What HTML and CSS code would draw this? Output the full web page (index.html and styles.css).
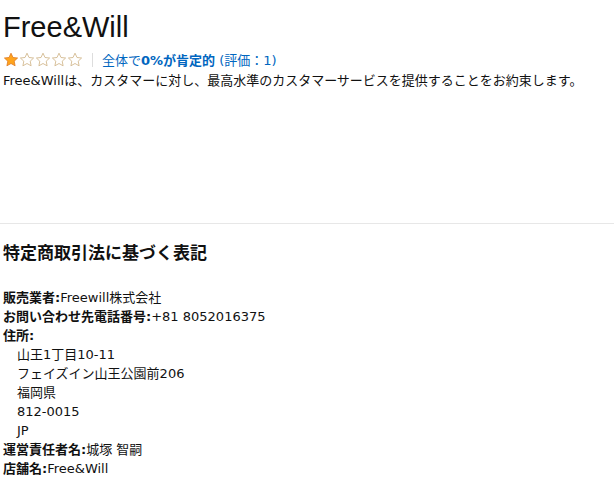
FILE: index.html
```html
<!DOCTYPE html>
<html lang="ja">
<head>
    <meta charset="UTF-8">
    <title>Free&amp;Will</title>
    <link rel="stylesheet" href="styles.css">
</head>
<body>
<div class="seller">
    <h1 class="seller-name">Free&amp;Will</h1>
    <div class="rating">
        <span class="stars">
            <svg class="star" viewBox="0 0 16 16"><path class="full" d="M8 1.2l2 4.3 4.6.5-3.4 3.2.9 4.6L8 11.5l-4.1 2.3.9-4.6L1.4 6l4.6-.5z"/></svg>
            <svg class="star" viewBox="0 0 16 16"><path class="empty" d="M8 1.2l2 4.3 4.6.5-3.4 3.2.9 4.6L8 11.5l-4.1 2.3.9-4.6L1.4 6l4.6-.5z"/></svg>
            <svg class="star" viewBox="0 0 16 16"><path class="empty" d="M8 1.2l2 4.3 4.6.5-3.4 3.2.9 4.6L8 11.5l-4.1 2.3.9-4.6L1.4 6l4.6-.5z"/></svg>
            <svg class="star" viewBox="0 0 16 16"><path class="empty" d="M8 1.2l2 4.3 4.6.5-3.4 3.2.9 4.6L8 11.5l-4.1 2.3.9-4.6L1.4 6l4.6-.5z"/></svg>
            <svg class="star" viewBox="0 0 16 16"><path class="empty" d="M8 1.2l2 4.3 4.6.5-3.4 3.2.9 4.6L8 11.5l-4.1 2.3.9-4.6L1.4 6l4.6-.5z"/></svg>
        </span>
        <span class="divider"></span>
        <a class="rating-link" href="#">全体で<b>0%が肯定的</b> (評価：1)</a>
    </div>
    <p class="intro">Free&amp;Willは、カスタマーに対し、最高水準のカスタマーサービスを提供することをお約束します。</p>
</div>

<hr class="rule">

<div class="legal">
    <h3 class="legal-title">特定商取引法に基づく表記</h3>
    <ul class="legal-list">
        <li><span class="label">販売業者:</span>Freewill株式会社</li>
        <li><span class="label">お問い合わせ先電話番号:</span>+81 8052016375</li>
        <li><span class="label">住所:</span>
            <ul class="address">
                <li>山王1丁目10-11</li>
                <li>フェイズイン山王公園前206</li>
                <li>福岡県</li>
                <li>812-0015</li>
                <li>JP</li>
            </ul>
        </li>
        <li><span class="label">運営責任者名:</span>城塚 智嗣</li>
        <li><span class="label">店舗名:</span>Free&amp;Will</li>
    </ul>
</div>
</body>
</html>
```

FILE: styles.css
```css
html, body {
    margin: 0;
    padding: 0;
    background-color: #fff;
    color: #111;
    font-family: "DejaVu Sans", "Noto Sans CJK JP", sans-serif;
    font-size: 13px;
    line-height: 19px;
}

.seller {
    padding: 9px 3px 0;
    height: 214px;
}

.seller-name {
    margin: 0;
    font-family: "Liberation Sans", "Noto Sans CJK JP", sans-serif;
    font-size: 29px;
    font-weight: normal;
    line-height: 36px;
    color: #111;
}

.rating {
    display: flex;
    align-items: center;
    margin-top: 5px;
    height: 19px;
}

.stars {
    display: flex;
}

.star {
    width: 16px;
    height: 16px;
}

.star .full {
    fill: #ffa41c;
    stroke: #de7921;
    stroke-width: 0.8;
    stroke-linejoin: round;
}

.star .empty {
    fill: #fff;
    stroke: #d2b98e;
    stroke-width: 0.9;
    stroke-linejoin: round;
}

.divider {
    width: 1px;
    height: 14px;
    background-color: #ddd;
    margin: 0 9px;
}

.rating-link {
    color: #0066c0;
    text-decoration: none;
    margin-top: 2px;
}

.rating-link b {
    font-weight: bold;
}

.intro {
    margin: 2px 0 0;
}

.rule {
    margin: 0;
    border: 0;
    border-top: 1px solid #e7e7e7;
    height: 0;
}

.legal {
    padding: 0 3px;
}

.legal-title {
    margin: 17px 0 0;
    font-size: 17px;
    line-height: 24px;
    font-weight: bold;
}

.legal-list {
    list-style: none;
    margin: 23px 0 0;
    padding: 0;
}

.label {
    font-weight: bold;
}

.address {
    list-style: none;
    margin: 0;
    padding: 0 0 0 14px;
}
```
